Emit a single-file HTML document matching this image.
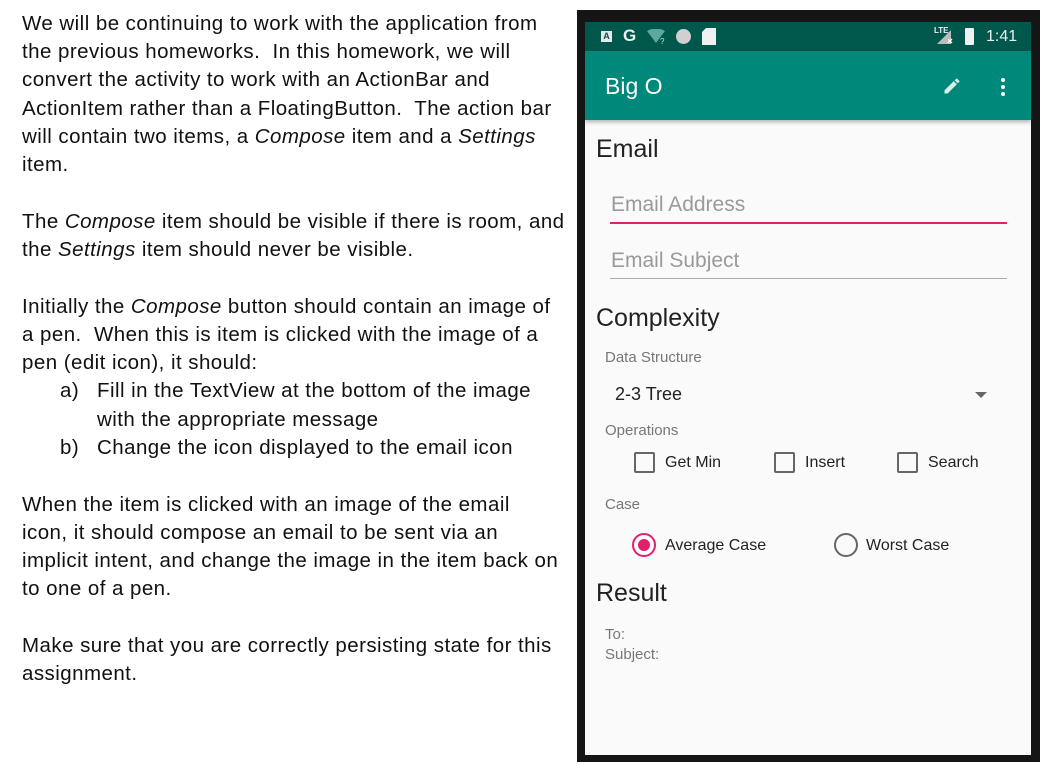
<!DOCTYPE html>
<html><head><meta charset="utf-8"><style>
*{margin:0;padding:0;box-sizing:border-box}
body{width:1062px;height:766px;background:#fff;position:relative;overflow:hidden;font-family:"Liberation Sans",sans-serif}
.l{position:absolute;left:22px;font-size:20.5px;letter-spacing:0.45px;line-height:28px;color:#111;white-space:nowrap}
.frame{position:absolute;left:577px;top:10px;width:463px;height:752px;background:#151515}
.scr{position:absolute;left:585px;top:22px;width:446px;height:733px;background:#fafafa;overflow:hidden}
.sb{position:absolute;left:0;top:0;width:446px;height:29px;background:#00574b}
.tb{position:absolute;left:0;top:29px;width:446px;height:69px;background:#00897b;box-shadow:0 2px 4px rgba(0,0,0,.3)}
.a{position:absolute;white-space:nowrap}
.g{color:#777;font-size:15px}
.h{color:#222;font-size:25px}
.cb{position:absolute;width:21px;height:21px;border:2px solid #666;border-radius:2px}
.t{font-size:16px;color:#222}
</style></head><body>
<div class="l" style="top:10px">We will be continuing to work with the application from</div>
<div class="l" style="top:38px">the previous homeworks.&nbsp; In this homework, we will</div>
<div class="l" style="top:66px">convert the activity to work with an ActionBar and</div>
<div class="l" style="top:95px">ActionItem rather than a FloatingButton.&nbsp; The action bar</div>
<div class="l" style="top:123px">will contain two items, a <i>Compose</i> item and a <i>Settings</i></div>
<div class="l" style="top:151px">item.</div>
<div class="l" style="top:208px">The <i>Compose</i> item should be visible if there is room, and</div>
<div class="l" style="top:236px">the <i>Settings</i> item should never be visible.</div>
<div class="l" style="top:293px">Initially the <i>Compose</i> button should contain an image of</div>
<div class="l" style="top:321px">a pen.&nbsp; When this is item is clicked with the image of a</div>
<div class="l" style="top:349px">pen (edit icon), it should:</div>
<div class="l" style="top:377px;left:60px">a)</div><div class="l" style="top:377px;left:97px">Fill in the TextView at the bottom of the image</div>
<div class="l" style="top:406px;left:97px">with the appropriate message</div>
<div class="l" style="top:434px;left:60px">b)</div><div class="l" style="top:434px;left:97px">Change the icon displayed to the email icon</div>
<div class="l" style="top:491px">When the item is clicked with an image of the email</div>
<div class="l" style="top:519px">icon, it should compose an email to be sent via an</div>
<div class="l" style="top:547px">implicit intent, and change the image in the item back on</div>
<div class="l" style="top:575px">to one of a pen.</div>
<div class="l" style="top:632px">Make sure that you are correctly persisting state for this</div>
<div class="l" style="top:660px">assignment.</div>

<div class="frame"></div>
<div class="scr">
 <div class="sb">
  <div class="a" style="left:16px;top:9px;width:11px;height:11px;background:#e8e8e8;color:#00574b;font-size:9px;font-weight:bold;line-height:11px;text-align:center">A</div>
  <div class="a" style="left:38px;top:4px;color:#eee;font-size:17px;font-weight:bold">G</div>
  <svg class="a" style="left:62px;top:7px" width="22" height="16"><path d="M0 2 Q9 -3 18 2 L9 14Z" fill="#5aa99c"/><text x="13" y="15" font-size="8" fill="#ddd" font-family="Liberation Sans">?</text></svg>
  <div class="a" style="left:91px;top:7px;width:15px;height:15px;border-radius:50%;background:#d0d0d0"></div>
  <svg class="a" style="left:117px;top:6px" width="14" height="17"><path d="M4 0H14V17H0V4Z" fill="#f0f0f0"/></svg>
  <div class="a" style="left:349px;top:4px;color:#eee;font-size:8px;font-weight:bold">LTE</div>
  <svg class="a" style="left:352px;top:8px" width="16" height="14"><path d="M14 0V14H0Z" fill="#bbb"/><path d="M11 9l4 4M15 9l-4 4" stroke="#fff" stroke-width="1.3"/></svg>
  <div class="a" style="left:380px;top:6px;width:9px;height:17px;background:#f0f0f0;border-radius:1px"></div>
  <div class="a" style="left:401px;top:6px;color:#eee;font-size:16px">1:41</div>
 </div>
 <div class="tb">
  <div class="a" style="left:20px;top:22px;color:#fff;font-size:23px">Big O</div>
  <svg class="a" style="left:357px;top:25px" width="20" height="20" viewBox="0 0 24 24"><path d="M3 17.25V21h3.75L17.81 9.94l-3.75-3.75L3 17.25zM20.71 7.04a1 1 0 000-1.41l-2.34-2.34a1 1 0 00-1.41 0l-1.83 1.83 3.75 3.75 1.83-1.83z" fill="#d7efe9"/></svg>
  <div class="a" style="left:416px;top:27px;width:4px;height:4px;border-radius:50%;background:#fff;box-shadow:0 7px 0 #fff,0 14px 0 #fff"></div>
 </div>
 <div class="a h" style="left:11px;top:113px">Email</div>
 <div class="a" style="left:26px;top:171px;font-size:21px;color:#9a9a9a">Email Address</div>
 <div class="a" style="left:25px;top:200px;width:397px;height:2px;background:#e0206a"></div>
 <div class="a" style="left:26px;top:227px;font-size:21px;color:#9a9a9a">Email Subject</div>
 <div class="a" style="left:25px;top:256px;width:397px;height:1px;background:#aaa"></div>
 <div class="a h" style="left:11px;top:282px">Complexity</div>
 <div class="a g" style="left:20px;top:327px">Data Structure</div>
 <div class="a" style="left:30px;top:362px;font-size:18px;color:#222">2-3 Tree</div>
 <div class="a" style="left:390px;top:370px;width:0;height:0;border-left:6px solid transparent;border-right:6px solid transparent;border-top:6px solid #666"></div>
 <div class="a g" style="left:20px;top:400px">Operations</div>
 <div class="cb" style="left:49px;top:430px"></div><div class="a t" style="left:80px;top:432px">Get Min</div>
 <div class="cb" style="left:189px;top:430px"></div><div class="a t" style="left:220px;top:432px">Insert</div>
 <div class="cb" style="left:312px;top:430px"></div><div class="a t" style="left:343px;top:432px">Search</div>
 <div class="a g" style="left:20px;top:474px">Case</div>
 <div class="a" style="left:47px;top:511px;width:24px;height:24px;border:2.5px solid #e0206a;border-radius:50%"></div>
 <div class="a" style="left:53px;top:517px;width:12px;height:12px;background:#e0206a;border-radius:50%"></div>
 <div class="a t" style="left:80px;top:515px">Average Case</div>
 <div class="a" style="left:249px;top:511px;width:24px;height:24px;border:2px solid #666;border-radius:50%"></div>
 <div class="a t" style="left:281px;top:515px">Worst Case</div>
 <div class="a h" style="left:11px;top:557px">Result</div>
 <div class="a g" style="left:20px;top:604px">To:</div>
 <div class="a g" style="left:20px;top:624px">Subject:</div>
</div>
</body></html>
